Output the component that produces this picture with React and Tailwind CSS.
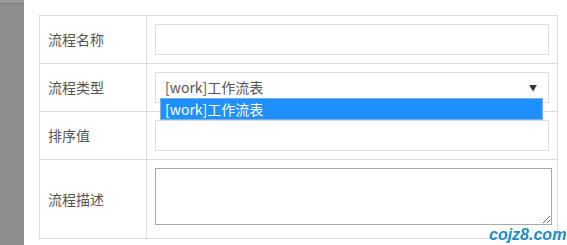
import React from 'react';

const font = { fontFamily: '"Noto Sans CJK SC", "Microsoft YaHei", sans-serif' };

function Row({ label, height, children }) {
  return (
    <div className={`flex border-b border-[#dddddd] ${height}`}>
      <div className="w-[107px] shrink-0 border-r border-[#dddddd] pl-[8px] flex items-center text-[14px] text-[#555]">
        {label}
      </div>
      <div className="flex-1 px-[8px] pt-[8px] relative">{children}</div>
    </div>
  );
}

export default function App() {
  return (
    <div className="flex w-[567px] h-[245px] overflow-hidden bg-white" style={font}>
      <div className="w-[24px] shrink-0 bg-[#8e8e8e] flex flex-col">
        <div className="h-[3px] bg-[#9a9a9a]" />
        <div className="h-[1px] bg-[#7c7c7c]" />
      </div>
      <div className="flex-1 relative pt-[15px] pl-[15px]">
        <div className="w-[519px] border-t border-l border-r border-[#dddddd]">
          <Row label="流程名称" height="h-[48px]">
            <div className="h-[31px] border border-[#dddddd] bg-white" />
          </Row>
          <Row label="流程类型" height="h-[48px]">
            <div className="h-[31px] border border-[#dddddd] bg-white flex items-center pl-[9px] pr-[11px] text-[14px] text-[#555]">
              <span className="flex-1">[work]工作流表</span>
              <span className="text-[8px] text-[#333]">▼</span>
            </div>
            <div className="absolute left-[13px] top-[34px] w-[383px] h-[22px] bg-[#1e90ff] border border-[#7eaee6] text-white text-[14px] leading-[20px] pl-[4px] z-10">
              [work]工作流表
            </div>
          </Row>
          <Row label="排序值" height="h-[48px]">
            <div className="h-[31px] border border-[#dddddd] bg-white" />
          </Row>
          <Row label="流程描述" height="h-[79px]">
            <textarea className="block w-[397px] h-[57px] border border-[#a9a9a9] bg-white resize-y" />
          </Row>
        </div>
        <div
          className="absolute left-[465px] bottom-[0px] text-[16px] font-bold italic text-[#1b8dc8] leading-[20px] whitespace-nowrap"
          style={{ fontFamily: '"Liberation Sans", Arial, sans-serif' }}
        >
          cojz8.com
        </div>
      </div>
    </div>
  );
}
